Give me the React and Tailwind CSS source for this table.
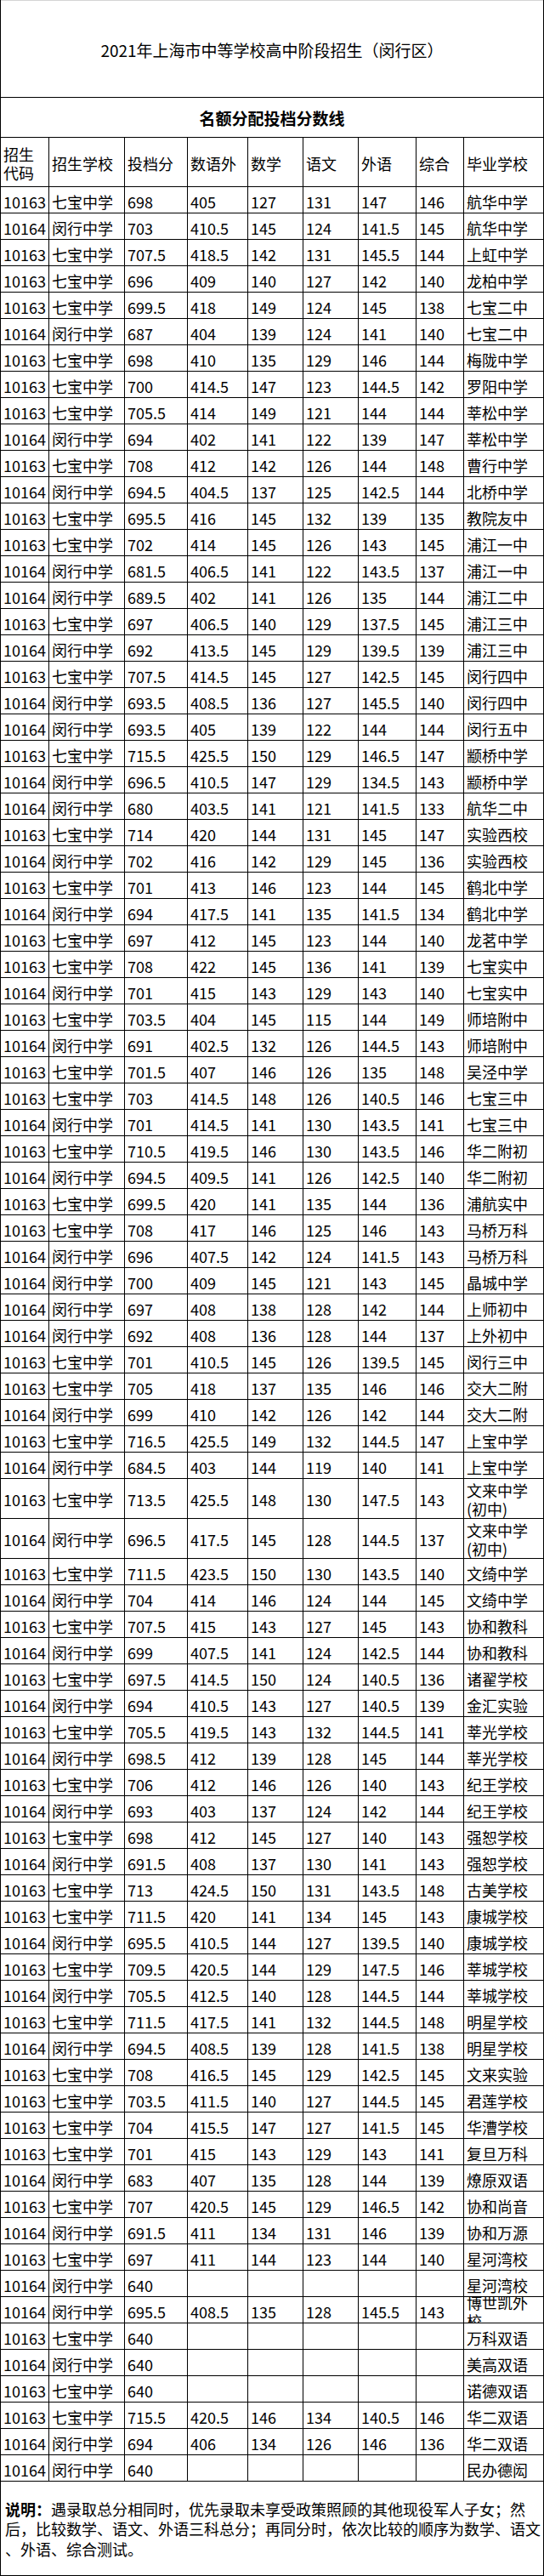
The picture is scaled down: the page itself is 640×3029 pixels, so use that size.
import React from 'react';

// 名额分配投档分数线 — 2021 闵行区
const HEAD = ['招生\n代码', '招生学校', '投档分', '数语外', '数学', '语文', '外语', '综合', '毕业学校'];

const COLS = [
  'w-[57px] border-r',
  'w-[89px] border-r',
  'w-[74px] border-r',
  'w-[71px] border-r',
  'w-[65px] border-r',
  'w-[65px] border-r',
  'w-[68px] border-r',
  'w-[56px] border-r',
  'flex-1',
];

const Q = ['10163', '七宝中学'];
const M = ['10164', '闵行中学'];

const ROWS = [
  [...Q, '698', '405', '127', '131', '147', '146', '航华中学'],
  [...M, '703', '410.5', '145', '124', '141.5', '145', '航华中学'],
  [...Q, '707.5', '418.5', '142', '131', '145.5', '144', '上虹中学'],
  [...Q, '696', '409', '140', '127', '142', '140', '龙柏中学'],
  [...Q, '699.5', '418', '149', '124', '145', '138', '七宝二中'],
  [...M, '687', '404', '139', '124', '141', '140', '七宝二中'],
  [...Q, '698', '410', '135', '129', '146', '144', '梅陇中学'],
  [...Q, '700', '414.5', '147', '123', '144.5', '142', '罗阳中学'],
  [...Q, '705.5', '414', '149', '121', '144', '144', '莘松中学'],
  [...M, '694', '402', '141', '122', '139', '147', '莘松中学'],
  [...Q, '708', '412', '142', '126', '144', '148', '曹行中学'],
  [...M, '694.5', '404.5', '137', '125', '142.5', '144', '北桥中学'],
  [...Q, '695.5', '416', '145', '132', '139', '135', '教院友中'],
  [...Q, '702', '414', '145', '126', '143', '145', '浦江一中'],
  [...M, '681.5', '406.5', '141', '122', '143.5', '137', '浦江一中'],
  [...M, '689.5', '402', '141', '126', '135', '144', '浦江二中'],
  [...Q, '697', '406.5', '140', '129', '137.5', '145', '浦江三中'],
  [...M, '692', '413.5', '145', '129', '139.5', '139', '浦江三中'],
  [...Q, '707.5', '414.5', '145', '127', '142.5', '145', '闵行四中'],
  [...M, '693.5', '408.5', '136', '127', '145.5', '140', '闵行四中'],
  [...M, '693.5', '405', '139', '122', '144', '144', '闵行五中'],
  [...Q, '715.5', '425.5', '150', '129', '146.5', '147', '颛桥中学'],
  [...M, '696.5', '410.5', '147', '129', '134.5', '143', '颛桥中学'],
  [...M, '680', '403.5', '141', '121', '141.5', '133', '航华二中'],
  [...Q, '714', '420', '144', '131', '145', '147', '实验西校'],
  [...M, '702', '416', '142', '129', '145', '136', '实验西校'],
  [...Q, '701', '413', '146', '123', '144', '145', '鹤北中学'],
  [...M, '694', '417.5', '141', '135', '141.5', '134', '鹤北中学'],
  [...Q, '697', '412', '145', '123', '144', '140', '龙茗中学'],
  [...Q, '708', '422', '145', '136', '141', '139', '七宝实中'],
  [...M, '701', '415', '143', '129', '143', '140', '七宝实中'],
  [...Q, '703.5', '404', '145', '115', '144', '149', '师培附中'],
  [...M, '691', '402.5', '132', '126', '144.5', '143', '师培附中'],
  [...Q, '701.5', '407', '146', '126', '135', '148', '吴泾中学'],
  [...Q, '703', '414.5', '148', '126', '140.5', '146', '七宝三中'],
  [...M, '701', '414.5', '141', '130', '143.5', '141', '七宝三中'],
  [...Q, '710.5', '419.5', '146', '130', '143.5', '146', '华二附初'],
  [...M, '694.5', '409.5', '141', '126', '142.5', '140', '华二附初'],
  [...Q, '699.5', '420', '141', '135', '144', '136', '浦航实中'],
  [...Q, '708', '417', '146', '125', '146', '143', '马桥万科'],
  [...M, '696', '407.5', '142', '124', '141.5', '143', '马桥万科'],
  [...M, '700', '409', '145', '121', '143', '145', '晶城中学'],
  [...M, '697', '408', '138', '128', '142', '144', '上师初中'],
  [...M, '692', '408', '136', '128', '144', '137', '上外初中'],
  [...Q, '701', '410.5', '145', '126', '139.5', '145', '闵行三中'],
  [...Q, '705', '418', '137', '135', '146', '146', '交大二附'],
  [...M, '699', '410', '142', '126', '142', '144', '交大二附'],
  [...Q, '716.5', '425.5', '149', '132', '144.5', '147', '上宝中学'],
  [...M, '684.5', '403', '144', '119', '140', '141', '上宝中学'],
  [...Q, '713.5', '425.5', '148', '130', '147.5', '143', '文来中学\n(初中)'],
  [...M, '696.5', '417.5', '145', '128', '144.5', '137', '文来中学\n(初中)'],
  [...Q, '711.5', '423.5', '150', '130', '143.5', '140', '文绮中学'],
  [...M, '704', '414', '146', '124', '144', '145', '文绮中学'],
  [...Q, '707.5', '415', '143', '127', '145', '143', '协和教科'],
  [...M, '699', '407.5', '141', '124', '142.5', '144', '协和教科'],
  [...Q, '697.5', '414.5', '150', '124', '140.5', '136', '诸翟学校'],
  [...M, '694', '410.5', '143', '127', '140.5', '139', '金汇实验'],
  [...Q, '705.5', '419.5', '143', '132', '144.5', '141', '莘光学校'],
  [...M, '698.5', '412', '139', '128', '145', '144', '莘光学校'],
  [...Q, '706', '412', '146', '126', '140', '143', '纪王学校'],
  [...M, '693', '403', '137', '124', '142', '144', '纪王学校'],
  [...Q, '698', '412', '145', '127', '140', '143', '强恕学校'],
  [...M, '691.5', '408', '137', '130', '141', '143', '强恕学校'],
  [...Q, '713', '424.5', '150', '131', '143.5', '148', '古美学校'],
  [...Q, '711.5', '420', '141', '134', '145', '143', '康城学校'],
  [...M, '695.5', '410.5', '144', '127', '139.5', '140', '康城学校'],
  [...Q, '709.5', '420.5', '144', '129', '147.5', '146', '莘城学校'],
  [...M, '705.5', '412.5', '140', '128', '144.5', '144', '莘城学校'],
  [...Q, '711.5', '417.5', '141', '132', '144.5', '148', '明星学校'],
  [...M, '694.5', '408.5', '139', '128', '141.5', '138', '明星学校'],
  [...Q, '708', '416.5', '145', '129', '142.5', '145', '文来实验'],
  [...Q, '703.5', '411.5', '140', '127', '144.5', '145', '君莲学校'],
  [...Q, '704', '415.5', '147', '127', '141.5', '145', '华漕学校'],
  [...Q, '701', '415', '143', '129', '143', '141', '复旦万科'],
  [...M, '683', '407', '135', '128', '144', '139', '燎原双语'],
  [...Q, '707', '420.5', '145', '129', '146.5', '142', '协和尚音'],
  [...M, '691.5', '411', '134', '131', '146', '139', '协和万源'],
  [...Q, '697', '411', '144', '123', '144', '140', '星河湾校'],
  [...M, '640', '', '', '', '', '', '星河湾校'],
  [...M, '695.5', '408.5', '135', '128', '145.5', '143', '博世凯外\n校'],
  [...Q, '640', '', '', '', '', '', '万科双语'],
  [...M, '640', '', '', '', '', '', '美高双语'],
  [...Q, '640', '', '', '', '', '', '诺德双语'],
  [...Q, '715.5', '420.5', '146', '134', '140.5', '146', '华二双语'],
  [...M, '694', '406', '134', '126', '146', '136', '华二双语'],
  [...M, '640', '', '', '', '', '', '民办德闳'],
];

function Lines({ text }) {
  const parts = text.split('\n');
  return (
    <div className="leading-[22px]">
      {parts.map((p, i) => (
        <div key={i} className="whitespace-nowrap">
          {p}
        </div>
      ))}
    </div>
  );
}

function Row({ cells, tall, head }) {
  const h = head ? 'h-[58px]' : tall ? 'h-[47px]' : 'h-[31px]';
  return (
    <div className={`flex ${h} border-b border-black`}>
      {cells.map((c, i) => (
        <div
          key={i}
          className={`${COLS[i]} border-black flex items-center overflow-hidden pl-[3px] ${
            tall ? 'pt-[1px]' : 'pt-[3px]'
          }`}
        >
          <Lines text={c} />
        </div>
      ))}
    </div>
  );
}

export default function App() {
  return (
    <div className="w-[640px] bg-white text-black text-[18px] font-['Noto_Sans_CJK_SC','Noto_Sans',sans-serif]">
      <div className="border-l border-r border-black">
        <div className="h-[115px] border-t border-t-[#d4d4d4] border-b border-black flex items-center justify-center pt-[4px] text-[19px]">
          2021年上海市中等学校高中阶段招生（闵行区）
        </div>
        <div className="h-[47px] border-b border-black flex items-center justify-center pt-[3px] text-[19px] font-bold">
          名额分配投档分数线
        </div>
        <Row cells={HEAD} head />
        {ROWS.map((r, i) => (
          <Row key={i} cells={r} tall={r[8].startsWith('文来中学')} />
        ))}
        <div className="h-[111px] border-b border-black flex flex-col justify-center pl-[5px] pt-[2px] leading-[23.5px] whitespace-nowrap">
          <div>
            <span className="font-bold">说明：</span>遇录取总分相同时，优先录取未享受政策照顾的其他现役军人子女；然
          </div>
          <div>后，比较数学、语文、外语三科总分；再同分时，依次比较的顺序为数学、语文</div>
          <div>、外语、综合测试。</div>
        </div>
      </div>
    </div>
  );
}
